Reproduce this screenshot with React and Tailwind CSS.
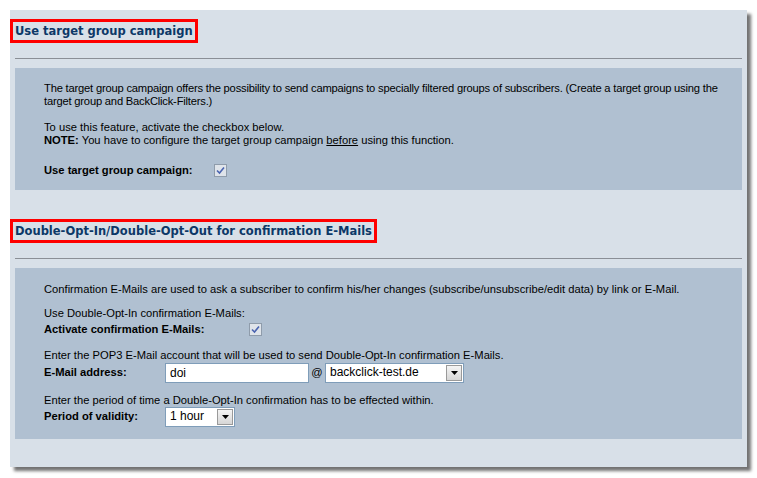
import { useState } from 'react';

const body = { fontFamily: '"Liberation Sans", Arial, sans-serif' };
const head = { fontFamily: '"DejaVu Sans", Verdana, sans-serif' };

function Check({ checked, onToggle }) {
  return (
    <span onClick={onToggle} className="inline-flex h-[13px] w-[13px] items-center justify-center border border-[#8f9cab] bg-[#dfe4ea]">
      {checked && (
        <svg width="9" height="9" viewBox="0 0 9 9">
          <path d="M1 4.5 L3.5 7 L8 1.5" fill="none" stroke="#4a64b0" strokeWidth="1.6" />
        </svg>
      )}
    </span>
  );
}

function Select({ value, width }) {
  return (
    <div className={`flex h-[20px] items-center border border-[#7f9db9] bg-white ${width}`}>
      <span className="flex-1 pl-[4px] text-[12px] text-black">{value}</span>
      <span className="mr-[1px] flex h-[16px] w-[16px] items-center justify-center border border-[#9a9a9a] bg-gradient-to-b from-[#f4f4f4] to-[#d6d6d6]">
        <svg width="7" height="4" viewBox="0 0 7 4"><path d="M0 0 H7 L3.5 4 Z" fill="#000" /></svg>
      </span>
    </div>
  );
}

function Heading({ children }) {
  return (
    <div className="flex">
      <h2 style={head} className="border-[3px] border-[#ff0000] px-[2px] text-[11.5px] font-bold leading-[18px] text-[#0c3867]">
        {children}
      </h2>
    </div>
  );
}

export default function App() {
  const [useGroup, setUseGroup] = useState(true);
  const [doi, setDoi] = useState(true);
  const [local, setLocal] = useState('doi');

  return (
    <div className="h-[478px] w-[757px] bg-white pl-[10px] pt-[10px]" style={body}>
      <div className="h-[457px] w-[737px] bg-[#d8e0e8] shadow-[4px_4px_3px_rgba(0,0,0,0.55)]">
        <div className="pt-[9px]">
          <Heading>Use target group campaign</Heading>
        </div>
        <div className="mx-[5px] mt-[15px] border-t border-[#8a8f96]" />
        <div className="mx-[5px] mt-[9px] h-[122px] bg-[#b0c0d1] pl-[29px] pr-[2px] pt-[14px] text-[11.2px] leading-[13px] text-black">
          <p className="tracking-[-0.2px]">The target group campaign offers the possibility to send campaigns to specially filtered groups of subscribers. (Create a target group using the target group and BackClick-Filters.)</p>
          <p className="mt-[13px]">To use this feature, activate the checkbox below.</p>
          <p><b>NOTE:</b> You have to configure the target group campaign <u>before</u> using this function.</p>
          <div className="mt-[17px] flex items-center">
            <b className="w-[170px]">Use target group campaign:</b>
            <Check checked={useGroup} onToggle={() => setUseGroup(!useGroup)} />
          </div>
        </div>

        <div className="mt-[29px]">
          <Heading>Double-Opt-In/Double-Opt-Out for confirmation E-Mails</Heading>
        </div>
        <div className="mx-[5px] mt-[15px] border-t border-[#8a8f96]" />
        <div className="mx-[5px] mt-[9px] h-[171px] bg-[#b0c0d1] pl-[29px] pr-[2px] pt-[15px] text-[11.2px] leading-[13px] text-black">
          <p>Confirmation E-Mails are used to ask a subscriber to confirm his/her changes (subscribe/unsubscribe/edit data) by link or E-Mail.</p>
          <p className="mt-[11px]">Use Double-Opt-In confirmation E-Mails:</p>
          <div className="flex h-[19px] items-center">
            <b className="w-[205px]">Activate confirmation E-Mails:</b>
            <Check checked={doi} onToggle={() => setDoi(!doi)} />
          </div>
          <p className="mt-[10px]">Enter the POP3 E-Mail account that will be used to send Double-Opt-In confirmation E-Mails.</p>
          <div className="flex h-[21px] items-center">
            <b className="w-[121px]">E-Mail address:</b>
            <input
              value={local}
              onChange={(e) => setLocal(e.target.value)}
              className="h-[20px] w-[144px] border border-[#7f9db9] bg-white px-[4px] text-[12px] outline-none"
            />
            <span className="w-[16px] text-center">@</span>
            <Select value="backclick-test.de" width="w-[139px]" />
          </div>
          <p className="mt-[11px]">Enter the period of time a Double-Opt-In confirmation has to be effected within.</p>
          <div className="flex h-[19px] items-center">
            <b className="w-[121px]">Period of validity:</b>
            <Select value="1 hour" width="w-[70px]" />
          </div>
        </div>
      </div>
    </div>
  );
}
